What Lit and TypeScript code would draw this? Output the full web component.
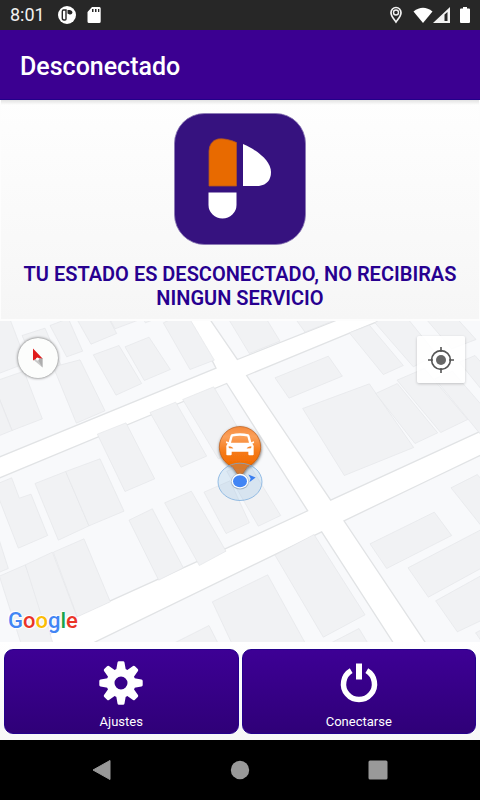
import { LitElement, html, svg, css } from "lit";
import { customElement } from "lit/decorators.js";

// City blocks, in map drawing units (three per CSS pixel at phone width).
const BLOCKS = [
  "-6,414 648,146 640,130 564,-6 -6,-6",
  "626,-6 712,120 1030,-6",
  "-6,477 680,192 923,574 720,668 230,890 105,975 -6,975",
  "740,168 1162,-6 1446,-6 1446,333 992,542",
  "270,975 965,637 1183,975",
  "1032,604 1290,480 1446,405 1446,975 1280,975",
];

const BUILDINGS = [
  "-6,-6 28,-6 80,130 -6,163",
  "66,48 135,26 182,135 120,165",
  "150,18 205,-3 248,95 200,112",
  "229,-4 326,-4 350,42 273,74",
  "328,-4 345,28 425,-2",
  "430,-2 436,10 462,0",
  "280,106 357,78 425,192 348,227",
  "375,82 447,53 511,150 433,183",
  "490,10 520,-4 568,-4 643,122 570,150",
  "160,142 240,121 315,274 229,311",
  "-6,182 72,155 127,298 36,333 -6,228",
  "-6,228 36,333 -6,350",
  "292,344 378,310 464,478 375,516",
  "450,279 527,248 620,410 543,443",
  "548,240 641,202 745,378 655,418",
  "105,492 197,456 267,619 175,662",
  "197,456 300,418 372,575 267,619",
  "-6,492 35,475 58,536 93,524 143,648 55,686 -6,530",
  "-6,650 25,747 -6,760",
  "-2,770 76,736 130,880 160,975 64,975",
  "76,736 157,698 230,890 136,925",
  "160,698 252,658 331,847 232,892",
  "387,602 457,568 550,745 476,782",
  "494,550 574,515 678,695 598,738",
  "612,518 690,484 748,610 678,642",
  "680,455 745,430 842,588 775,620",
  "825,707 942,645 1095,886 970,953",
  "637,847 803,766 918,975 697,975",
  "514,975 627,918 656,975",
  "984,975 1077,927 1106,975",
  "684,-4 748,102 840,65 798,-4",
  "885,-4 915,38 1015,-2",
  "825,175 985,110 1027,170 867,236",
  "908,267 1108,193 1241,384 1033,468",
  "1127,222 1192,192 1313,340 1245,372",
  "1191,182 1273,147 1403,300 1322,339",
  "1305,178 1357,155 1446,258 1446,350",
  "1378,128 1425,108 1446,132 1446,212",
  "1048,40 1108,17 1210,138 1150,165",
  "1125,10 1145,-4 1222,-4 1310,105 1240,142",
  "1276,-4 1370,-4 1428,60 1355,88",
  "1110,673 1303,578 1355,648 1160,747",
  "1224,745 1446,629 1446,745 1285,833",
  "1307,844 1446,767 1446,902 1372,937",
  "1427,940 1446,930 1446,968",
  "1353,505 1432,465 1446,482 1446,622",
];

@customElement("city-map")
export class CityMap extends LitElement {
  static styles = css`
    :host {
      display: block;
      position: relative;
      overflow: hidden;
      background: #fff;
    }
    .streets {
      position: absolute;
      inset: 0;
      width: 100%;
      height: 100%;
    }
    .block {
      fill: #f8f9fb;
      stroke: #e1e3e5;
      stroke-width: 4;
    }
    .building {
      fill: #f1f2f4;
      stroke: #e4e6e8;
      stroke-width: 2;
    }
    button {
      position: absolute;
      display: grid;
      place-items: center;
      padding: 0;
      border: 0;
    }
    .compass {
      top: 17px;
      left: 18px;
      width: 40px;
      height: 40px;
      border-radius: 50%;
      background: #fcfdfc;
      box-shadow: 0 0 3px #555;
    }
    .locate {
      top: 15px;
      right: 15px;
      width: 48px;
      height: 47px;
      border-radius: 2px;
      background: #ffffffe0;
      box-shadow: 0 1px 3px #0003;
    }
    .brand {
      position: absolute;
      left: 8px;
      bottom: 8px;
      font: 500 22px/26px Roboto, sans-serif;
      text-shadow: 0 0 2px #fff, 0 0 2px #fff, 1px 1px 1px #fff, -1px -1px 1px #fff;
    }
    .blue { color: #4285f4; }
    .red { color: #ea3428; }
    .yellow { color: #fbbc05; }
    .green { color: #18a54a; }
  `;

  render() {
    return html`
      <svg class="streets" viewBox="0 3 1440 966" preserveAspectRatio="xMidYMid slice" role="img" aria-label="Mapa">
        <defs>
          <linearGradient id="pin" x1="0" y1="0" x2="0" y2="1">
            <stop offset="0" stop-color="#f58a3c" />
            <stop offset="0.2" stop-color="#fba05a" />
            <stop offset="0.5" stop-color="#f57a18" />
            <stop offset="0.75" stop-color="#f36c00" />
            <stop offset="1" stop-color="#e07015" />
          </linearGradient>
          <filter id="shade" x="-20%" y="-20%" width="140%" height="140%">
            <feDropShadow dx="1" dy="4" stdDeviation="4" flood-color="#000" flood-opacity="0.6" />
          </filter>
        </defs>
        ${BLOCKS.map((p) => svg`<polygon class="block" points=${p} />`)}
        ${BUILDINGS.map((p) => svg`<polygon class="building" points=${p} />`)}
        <path
          d="M720 474 L698 442 C674 432 658 408 658 383 A62 62 0 0 1 782 383 C782 408 766 432 742 442 Z"
          fill="url(#pin)" stroke="#b95a18" stroke-width="2" filter="url(#shade)"
        />
        <g transform="translate(720 375)" fill="#fff">
          <path fill-rule="evenodd" d="M-25 -31 Q0 -36 25 -31 Q28 -29 29 -25 L34 -7 L41 -10 Q44 -8 41 -4 L37 -3 Q42 2 41 12 V30 Q41 32 38 32 H28 Q25 32 25 29 V22 H-25 V29 Q-25 32 -28 32 H-38 Q-41 32 -41 30 V12 Q-42 2 -37 -3 L-41 -4 Q-44 -8 -41 -10 L-34 -7 L-29 -25 Q-28 -29 -25 -31 Z M-22 -24 L-27 -5 H27 L22 -24 Q0 -28 -22 -24 Z M-34 5 Q-35 10 -32 11 L-20 12 Q-22 6 -34 5 Z M34 5 Q35 10 32 11 L20 12 Q22 6 34 5 Z" />
        </g>
        <ellipse cx="720" cy="487" rx="66" ry="56" fill="#73aee0" fill-opacity="0.2" stroke="#75a9dc" stroke-opacity="0.75" stroke-width="3" />
        <path d="M745 465 L767 474 L748 488 L752 477 Z" fill="#3b7ff0" />
        <ellipse cx="720" cy="486" rx="27" ry="24" fill="#6b8199" fill-opacity="0.45" />
        <ellipse cx="720" cy="485" rx="25" ry="22" fill="#fff" />
        <ellipse cx="720" cy="485" rx="21" ry="18" fill="#4285f4" />
      </svg>
      <button class="compass" aria-label="Orientar al norte">
        <svg width="40" height="40" viewBox="0 0 40 40">
          <path d="M15 21.500 L24.500 20 V29.500 Z" fill="#c8c8c8" />
          <path d="M19.500 21 L24.500 20 V29.500 Z" fill="#adadad" />
          <path d="M15 10.500 L24.500 20.500 L19.500 20 L15 22.500 Z" fill="#e01c1c" />
          <circle cx="19.500" cy="21" r="1.500" fill="#fff" />
        </svg>
      </button>
      <button class="locate" aria-label="Mi ubicación">
        <svg width="28" height="28" viewBox="0 0 28 28" fill="none" stroke="#555" stroke-width="1.6">
          <circle cx="14" cy="14" r="9.4" />
          <circle cx="14" cy="14" r="5" fill="#666" stroke="none" />
          <path d="M14 1V6M14 22V27M1 14H6M22 14H27" />
        </svg>
      </button>
      <div class="brand"><span class="blue">G</span><span class="red">o</span><span class="yellow">o</span><span class="blue">g</span><span class="green">l</span><span class="red">e</span></div>
    `;
  }
}

@customElement("app-root")
export class AppRoot extends LitElement {
  static styles = css`
    :host {
      display: flex;
      flex-direction: column;
      min-height: 100vh;
      background: #f9f9f9;
      font-family: Roboto, sans-serif;
    }
    svg {
      display: block;
    }
    .status {
      display: flex;
      align-items: center;
      height: 30px;
      padding: 0 9px 0 10px;
      background: #272727;
      color: #f1f1f1;
    }
    .time {
      margin-right: 12px;
      font-size: 18px;
      line-height: 32px;
    }
    .left,
    .right {
      display: flex;
      align-items: center;
      gap: 10px;
    }
    .right {
      margin-left: auto;
      gap: 10px;
    }
    .signals {
      display: flex;
      margin-right: -2px;
    }
    .bar {
      box-sizing: border-box;
      height: 70px;
      padding: 0 20px;
      border-bottom: 1px solid #22008a;
      background: #3b0091;
      color: #fff;
    }
    h1 {
      margin: 0;
      font-size: 25px;
      font-weight: 500;
      line-height: 74px;
    }
    .hero {
      box-sizing: border-box;
      display: flex;
      flex-direction: column;
      align-items: center;
      gap: 16px;
      min-height: 221px;
      padding: 12px 20px 8px;
      border: solid #fdfdfd;
      border-width: 0 1px 2px;
      background:
        linear-gradient(#0000001c, #0000 5px),
        linear-gradient(#fefefe, #f6f6f6);
    }
    .hero p {
      margin: 0;
      color: #270090;
      font-size: 20px;
      font-weight: 600;
      line-height: 24px;
      text-align: center;
    }
    city-map {
      flex: 1;
      min-height: 300px;
    }
    .actions {
      display: grid;
      grid-template-columns: 1fr 1fr;
      gap: 3px;
      padding: 7px 4px 6px;
      background: linear-gradient(#fff, #f7f7f7);
    }
    .action {
      display: flex;
      flex-direction: column;
      align-items: center;
      gap: 9px;
      height: 85px;
      padding: 11px 0 0;
      border: 1px solid #24008c;
      border-radius: 9px;
      background: linear-gradient(#3d0095, #2f0078);
      color: #fff;
      font: 400 13px/16px Roboto, sans-serif;
    }
    .nav {
      display: flex;
      justify-content: center;
      gap: 90px;
      height: 60px;
      background: #000;
    }
    .nav button {
      display: grid;
      place-items: center;
      width: 48px;
      padding: 0;
      border: 0;
      background: none;
      color: #999;
    }
  `;

  render() {
    return html`
      <div class="status">
        <span class="time">8:01</span>
        <div class="left">
          <svg width="20" height="20" viewBox="0 0 20 20">
            <circle cx="10" cy="10" r="9" fill="#fff" />
            <path d="M5.300 6.500 Q5.300 5 6.500 5 H9 V14 Q9 15 8 15 H7 Q5.300 15 5.300 13 Z" fill="none" stroke="#272727" stroke-width="1.4" />
            <path d="M10.500 5 H13 Q15.500 5.500 15.500 7.500 Q15 10 12.500 9.500 L10.500 8.500 Z" fill="#272727" />
          </svg>
          <svg width="14" height="18" viewBox="0 0 14 18">
            <path fill="#fff" fill-rule="evenodd" d="M5 1H12.500Q13.700 1 13.700 2.500V15.500Q13.700 17 12.200 17H2Q0.500 17 0.500 15.500V6ZM5 3V6H6.500V3ZM8 3V6H9.500V3ZM11 3V6H12.300V3Z" />
          </svg>
        </div>
        <div class="right">
          <svg width="14" height="18" viewBox="0 0 14 18" fill="none" stroke="#f1f1f1">
            <path d="M7 16 C4.500 12.500 2 10 2 6.700 A5 5.200 0 0 1 12 6.700 C12 10 9.500 12.500 7 16Z" stroke-width="1.7" />
            <circle cx="7" cy="6.500" r="2.500" stroke-width="1.400" />
          </svg>
          <div class="signals">
            <svg width="20" height="18" viewBox="0 0 20 18">
              <path d="M0.500 5.500 Q10 -2 19.500 5.500 L10 17Z" fill="#fff" />
            </svg>
            <svg width="18" height="18" viewBox="0 0 18 18">
              <path fill="#f1f1f1" fill-rule="evenodd" d="M0 17 L17 1 V17ZM11.500 8.500V15H14.500V6Z" />
            </svg>
          </div>
          <svg width="12" height="18" viewBox="0 0 12 18">
            <path d="M4 1H8V2.500H10Q11 2.500 11 3.500V16Q11 17 10 17H2Q1 17 1 16V3.500Q1 2.500 2 2.500H4Z" fill="#fff" />
          </svg>
        </div>
      </div>

      <header class="bar"><h1>Desconectado</h1></header>

      <section class="hero">
        <svg width="134" height="134" viewBox="0 0 134 134" role="img" aria-label="Logotipo">
          <rect x="1.500" y="1.500" width="131" height="131" rx="30" fill="#36127f" stroke="#8a78b4" stroke-width="0.800" />
          <path d="M36 74 V39 Q36.500 29 45 27 Q53 26 63.500 30.500 V74Z" fill="#e86a00" stroke="#b4561f" stroke-width="0.800" />
          <path d="M70 32 C84 38 98 49 98 60 Q98 72 86 74 H70Z" fill="#fff" />
          <path d="M35.500 80.500 H63.500 V93 A14 13.500 0 0 1 35.500 93Z" fill="#fff" />
        </svg>
        <p>TU ESTADO ES DESCONECTADO, NO RECIBIRAS NINGUN SERVICIO</p>
      </section>

      <city-map></city-map>

      <div class="actions">
        <button class="action">
          <svg width="44" height="44" viewBox="0 0 44 44" fill="#fff">
            <path
              fill-rule="evenodd"
              d="M22 7.500 A14.500 14.500 0 1 0 22 36.500 A14.500 14.500 0 1 0 22 7.500Z M22 15.500 A6.500 6.500 0 1 1 22 28.500 A6.500 6.500 0 1 1 22 15.500Z"
            />
            ${[0, 45, 90, 135, 180, 225, 270, 315].map(
              (a) => svg`<path transform="rotate(${a} 22 22)" d="M17 10 L18.500 1.500 Q18.700 0.300 20 0.300 H24 Q25.300 0.300 25.500 1.500 L27 10Z" />`,
            )}
          </svg>
          Ajustes
        </button>
        <button class="action">
          <svg width="44" height="44" viewBox="0 0 44 44" fill="#fff">
            <path d="M19 2.500H25V18.500H19Z" />
            <path d="M14.200 9.700 A15.500 15.500 0 1 0 29.800 9.700" fill="none" stroke="#fff" stroke-width="5.500" />
          </svg>
          Conectarse
        </button>
      </div>

      <nav class="nav">
        <button aria-label="Atrás">
          <svg width="20" height="22" viewBox="0 0 20 22"><path d="M1 11 L18 1.500 V20.500Z" fill="#999" stroke="#999" stroke-linejoin="round" /></svg>
        </button>
        <button aria-label="Inicio">
          <svg width="20" height="20" viewBox="0 0 20 20"><circle cx="10" cy="10" r="9.200" fill="#999" /></svg>
        </button>
        <button aria-label="Recientes">
          <svg width="20" height="20" viewBox="0 0 20 20"><rect x="0.500" y="0.500" width="19" height="19" rx="1.500" fill="#999" /></svg>
        </button>
      </nav>
    `;
  }
}
